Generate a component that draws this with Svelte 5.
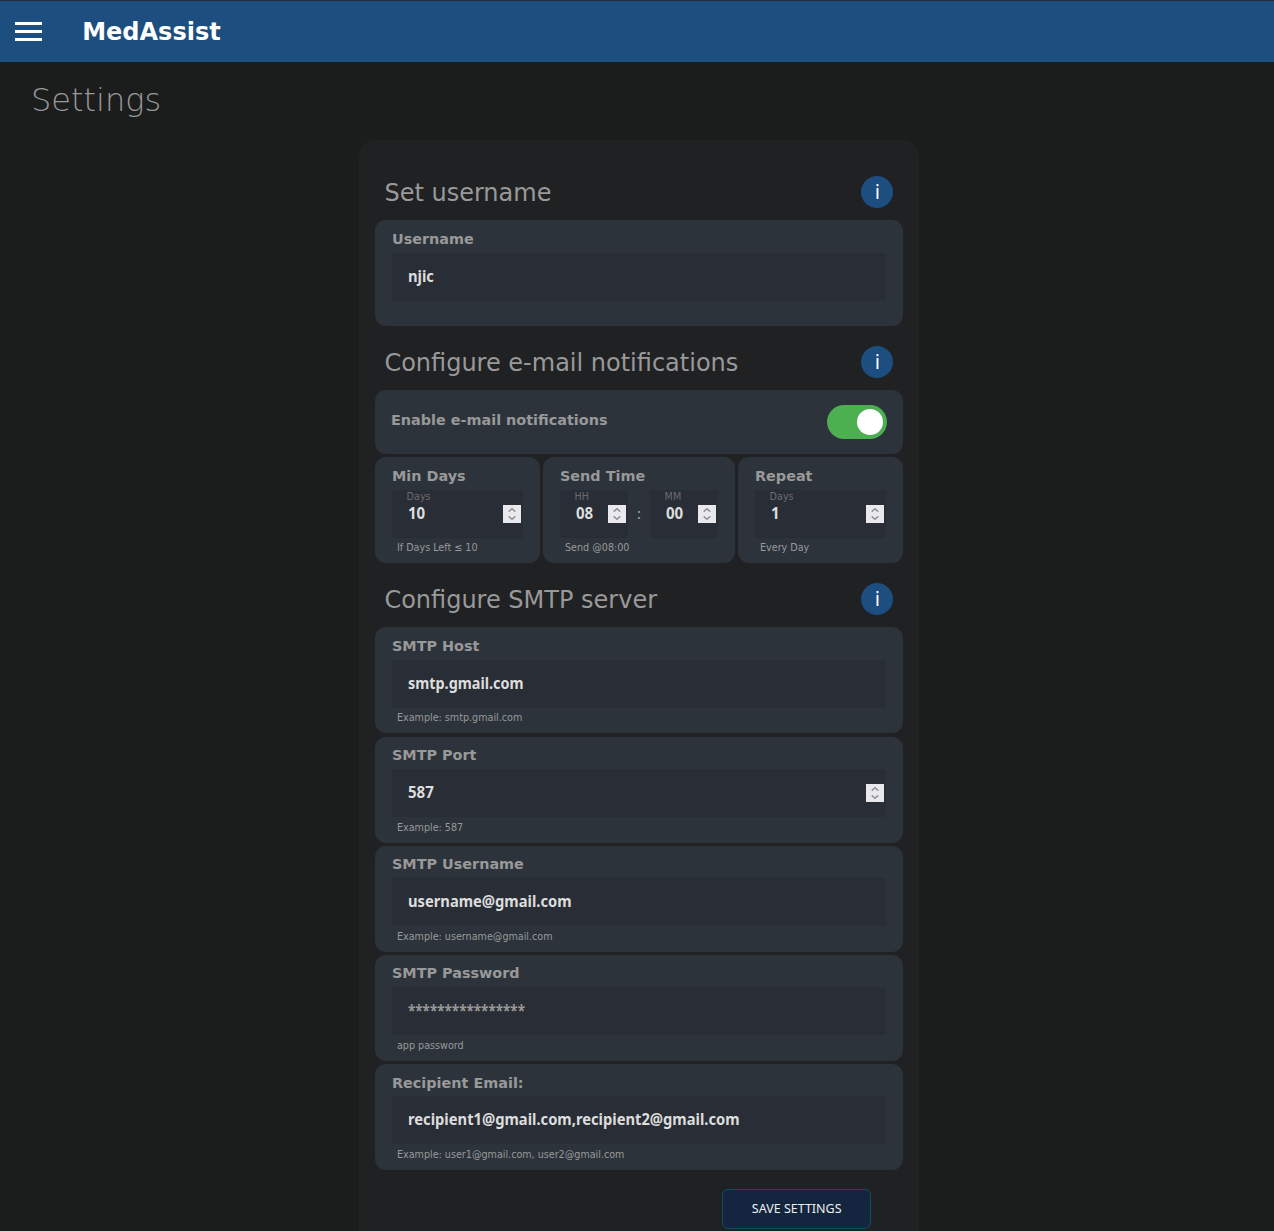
<script>
  const smtp = [
    { label: 'SMTP Host', value: 'smtp.gmail.com', hint: 'Example: smtp.gmail.com', cls: 'host' },
    { label: 'SMTP Port', value: '587', hint: 'Example: 587', cls: 'num', spin: true },
    { label: 'SMTP Username', value: 'username@gmail.com', hint: 'Example: username@gmail.com', cls: 'user' },
    { label: 'SMTP Password', value: '****************', hint: 'app password', cls: 'password' },
    { label: 'Recipient Email:', value: 'recipient1@gmail.com,recipient2@gmail.com', hint: 'Example: user1@gmail.com, user2@gmail.com', cls: 'recipient' }
  ];
</script>

{#snippet heading(text)}
  <div class="heading">
    <h2>{text}</h2>
    <button class="info" aria-label="Info">i</button>
  </div>
{/snippet}

{#snippet field(value, cls, spin, unit)}
  <div class="field">
    {#if unit}<span class="unit">{unit}</span>{/if}
    <span class="value {cls}">{value}</span>
    {#if spin}
      <svg class="spin" width="18" height="18" viewBox="0 0 18 18">
        <rect width="18" height="18" fill="#e9e9ed" />
        <path d="M5.7 6.6 9 3.7l3.3 2.9M5.7 11.4 9 14.3l3.3-2.9" fill="none" stroke="#8f8f9d" stroke-width="1.4" />
      </svg>
    {/if}
  </div>
{/snippet}

<header>
  <svg width="27" height="19" viewBox="0 0 27 19">
    <path d="M0 1.5h27M0 9.5h27M0 17.5h27" stroke="#fff" stroke-width="3" />
  </svg>
  <strong>MedAssist</strong>
</header>

<h1>Settings</h1>

<main>
  {@render heading('Set username')}
  <section class="card">
    <div class="label">Username</div>
    {@render field('njic', 'name')}
  </section>

  {@render heading('Configure e-mail notifications')}
  <div class="stack">
    <section class="card enable">
      <div class="label">Enable e-mail notifications</div>
      <div class="toggle"><span></span></div>
    </section>
    <div class="trio">
      <section class="card">
        <div class="label">Min Days</div>
        {@render field('10', 'num', true, 'Days')}
        <div class="hint">If Days Left ≤ 10</div>
      </section>
      <section class="card">
        <div class="label">Send Time</div>
        <div class="time">
          {@render field('08', 'num', true, 'HH')}
          <span class="colon">:</span>
          {@render field('00', 'num', true, 'MM')}
        </div>
        <div class="hint">Send @08:00</div>
      </section>
      <section class="card">
        <div class="label">Repeat</div>
        {@render field('1', 'num', true, 'Days')}
        <div class="hint">Every Day</div>
      </section>
    </div>
  </div>

  {@render heading('Configure SMTP server')}
  <div class="stack smtp">
    {#each smtp as s}
      <section class="card">
        <div class="label">{s.label}</div>
        {@render field(s.value, s.cls, s.spin)}
        <div class="hint">{s.hint}</div>
      </section>
    {/each}
  </div>

  <button class="save"><span>SAVE SETTINGS</span></button>
</main>

<style>
  :global(html) {
    overflow: hidden;
  }
  :global(body) {
    margin: 0;
    height: 1231px;
    overflow: hidden;
    background: #1b1d1c;
    font-family: 'DejaVu Sans', sans-serif;
    color: #999;
  }
  header {
    box-sizing: border-box;
    height: 62px;
    border-top: 1px solid #2b2a33;
    background: #1c4e80;
    display: flex;
    align-items: center;
    padding-left: 15px;
    gap: 40.2px;
    color: #fff;
  }
  header strong {
    font-size: 24px;
    line-height: 28px;
  }
  h1 {
    margin: 0;
    padding: 18px 0 0 31px;
    height: 60px;
    font-size: 32px;
    line-height: 40px;
    font-weight: 200;
  }
  main {
    box-sizing: border-box;
    width: 560px;
    height: 1120px;
    margin-left: 359px;
    padding: 16px;
    border-radius: 16px;
    background: #202123;
  }
  .heading {
    display: flex;
    align-items: center;
    justify-content: space-between;
    padding: 20px 10px 12px 9.4px;
    height: 32px;
  }
  h2 {
    margin: 0;
    padding-top: 2px;
    font-size: 24px;
    line-height: 32px;
    font-weight: 400;
    white-space: nowrap;
  }
  .info {
    width: 32px;
    height: 32px;
    padding: 0 0 0 1px;
    border: 0;
    border-radius: 50%;
    background: #1c4e80;
    color: #fff;
    font: 19px/32px 'DejaVu Sans', sans-serif;
  }
  .stack {
    display: flex;
    flex-direction: column;
    gap: 3.25px;
  }
  .card {
    box-sizing: border-box;
    height: 106px;
    padding: 9px 17px 0;
    border-radius: 11px;
    background: #2c333b;
  }
  .label {
    font-size: 14.4px;
    line-height: 20px;
    font-weight: 700;
    white-space: nowrap;
  }
  .enable {
    display: flex;
    justify-content: space-between;
    height: 64px;
    padding: 15px 16px 0;
  }
  .enable .label {
    line-height: 30px;
  }
  .toggle {
    box-sizing: border-box;
    width: 60px;
    height: 34px;
    padding: 4px;
    border-radius: 17px;
    background: #4caf50;
    display: flex;
    justify-content: flex-end;
  }
  .toggle span {
    width: 26px;
    height: 26px;
    border-radius: 50%;
    background: #fff;
  }
  .trio {
    display: grid;
    grid-template-columns: 165px 192px 165px;
    gap: 3px;
  }
  .field {
    position: relative;
    box-sizing: border-box;
    display: flex;
    align-items: center;
    justify-content: space-between;
    height: 48px;
    margin-top: 4px;
    padding: 0 2px 0 16px;
    border-radius: 3px;
    background: #292d35;
  }
  .smtp .card {
    padding-top: 8.6px;
  }
  .smtp .field {
    margin-top: 3.8px;
  }
  .smtp .card:nth-child(4) {
    padding-top: 8.2px;
  }
  .smtp .card:nth-child(4) .field {
    margin-top: 4.2px;
  }
  .smtp .card:last-child .field {
    margin-top: 3px;
  }
  .smtp .hint {
    padding-top: 2.9px;
  }
  .smtp .card:first-child .hint {
    padding-top: 2px;
  }
  .value {
    margin-top: -2px;
    font: 700 16px/24px 'Noto Sans', sans-serif;
    color: #ddd;
    white-space: nowrap;
    transform: scaleX(0.92);
    transform-origin: left;
  }
  .host {
    transform: scaleX(0.9);
  }
  .num {
    transform: scaleX(0.94);
  }
  .password {
    color: #999;
    transform: scaleX(0.843);
  }
  .recipient {
    margin-top: -1px;
  }
  .unit {
    position: absolute;
    left: 14.6px;
    top: 0;
    font: 10.7px/14px 'DejaVu Sans Condensed', 'DejaVu Sans', sans-serif;
    color: #6b6b6e;
  }
  .time {
    display: grid;
    grid-template-columns: 68px 22px 68px;
    align-items: center;
  }
  .colon {
    text-align: center;
    font-size: 16px;
    padding-top: 3px;
  }
  .hint {
    padding: 2px 0 0 5px;
    font: 10.66px/15px 'DejaVu Sans Condensed', 'DejaVu Sans', sans-serif;
    white-space: nowrap;
  }
  .save {
    display: block;
    box-sizing: border-box;
    width: 149px;
    height: 40px;
    margin: 19px 0 0 347px;
    padding: 0 0 2px;
    border: 1px solid #0d4f60;
    border-radius: 6px;
    background: #14253f;
    color: #eee;
    font: 13.3px/36px 'Noto Sans', sans-serif;
  }
  .save span {
    display: inline-block;
    transform: scaleX(0.94);
  }
</style>
